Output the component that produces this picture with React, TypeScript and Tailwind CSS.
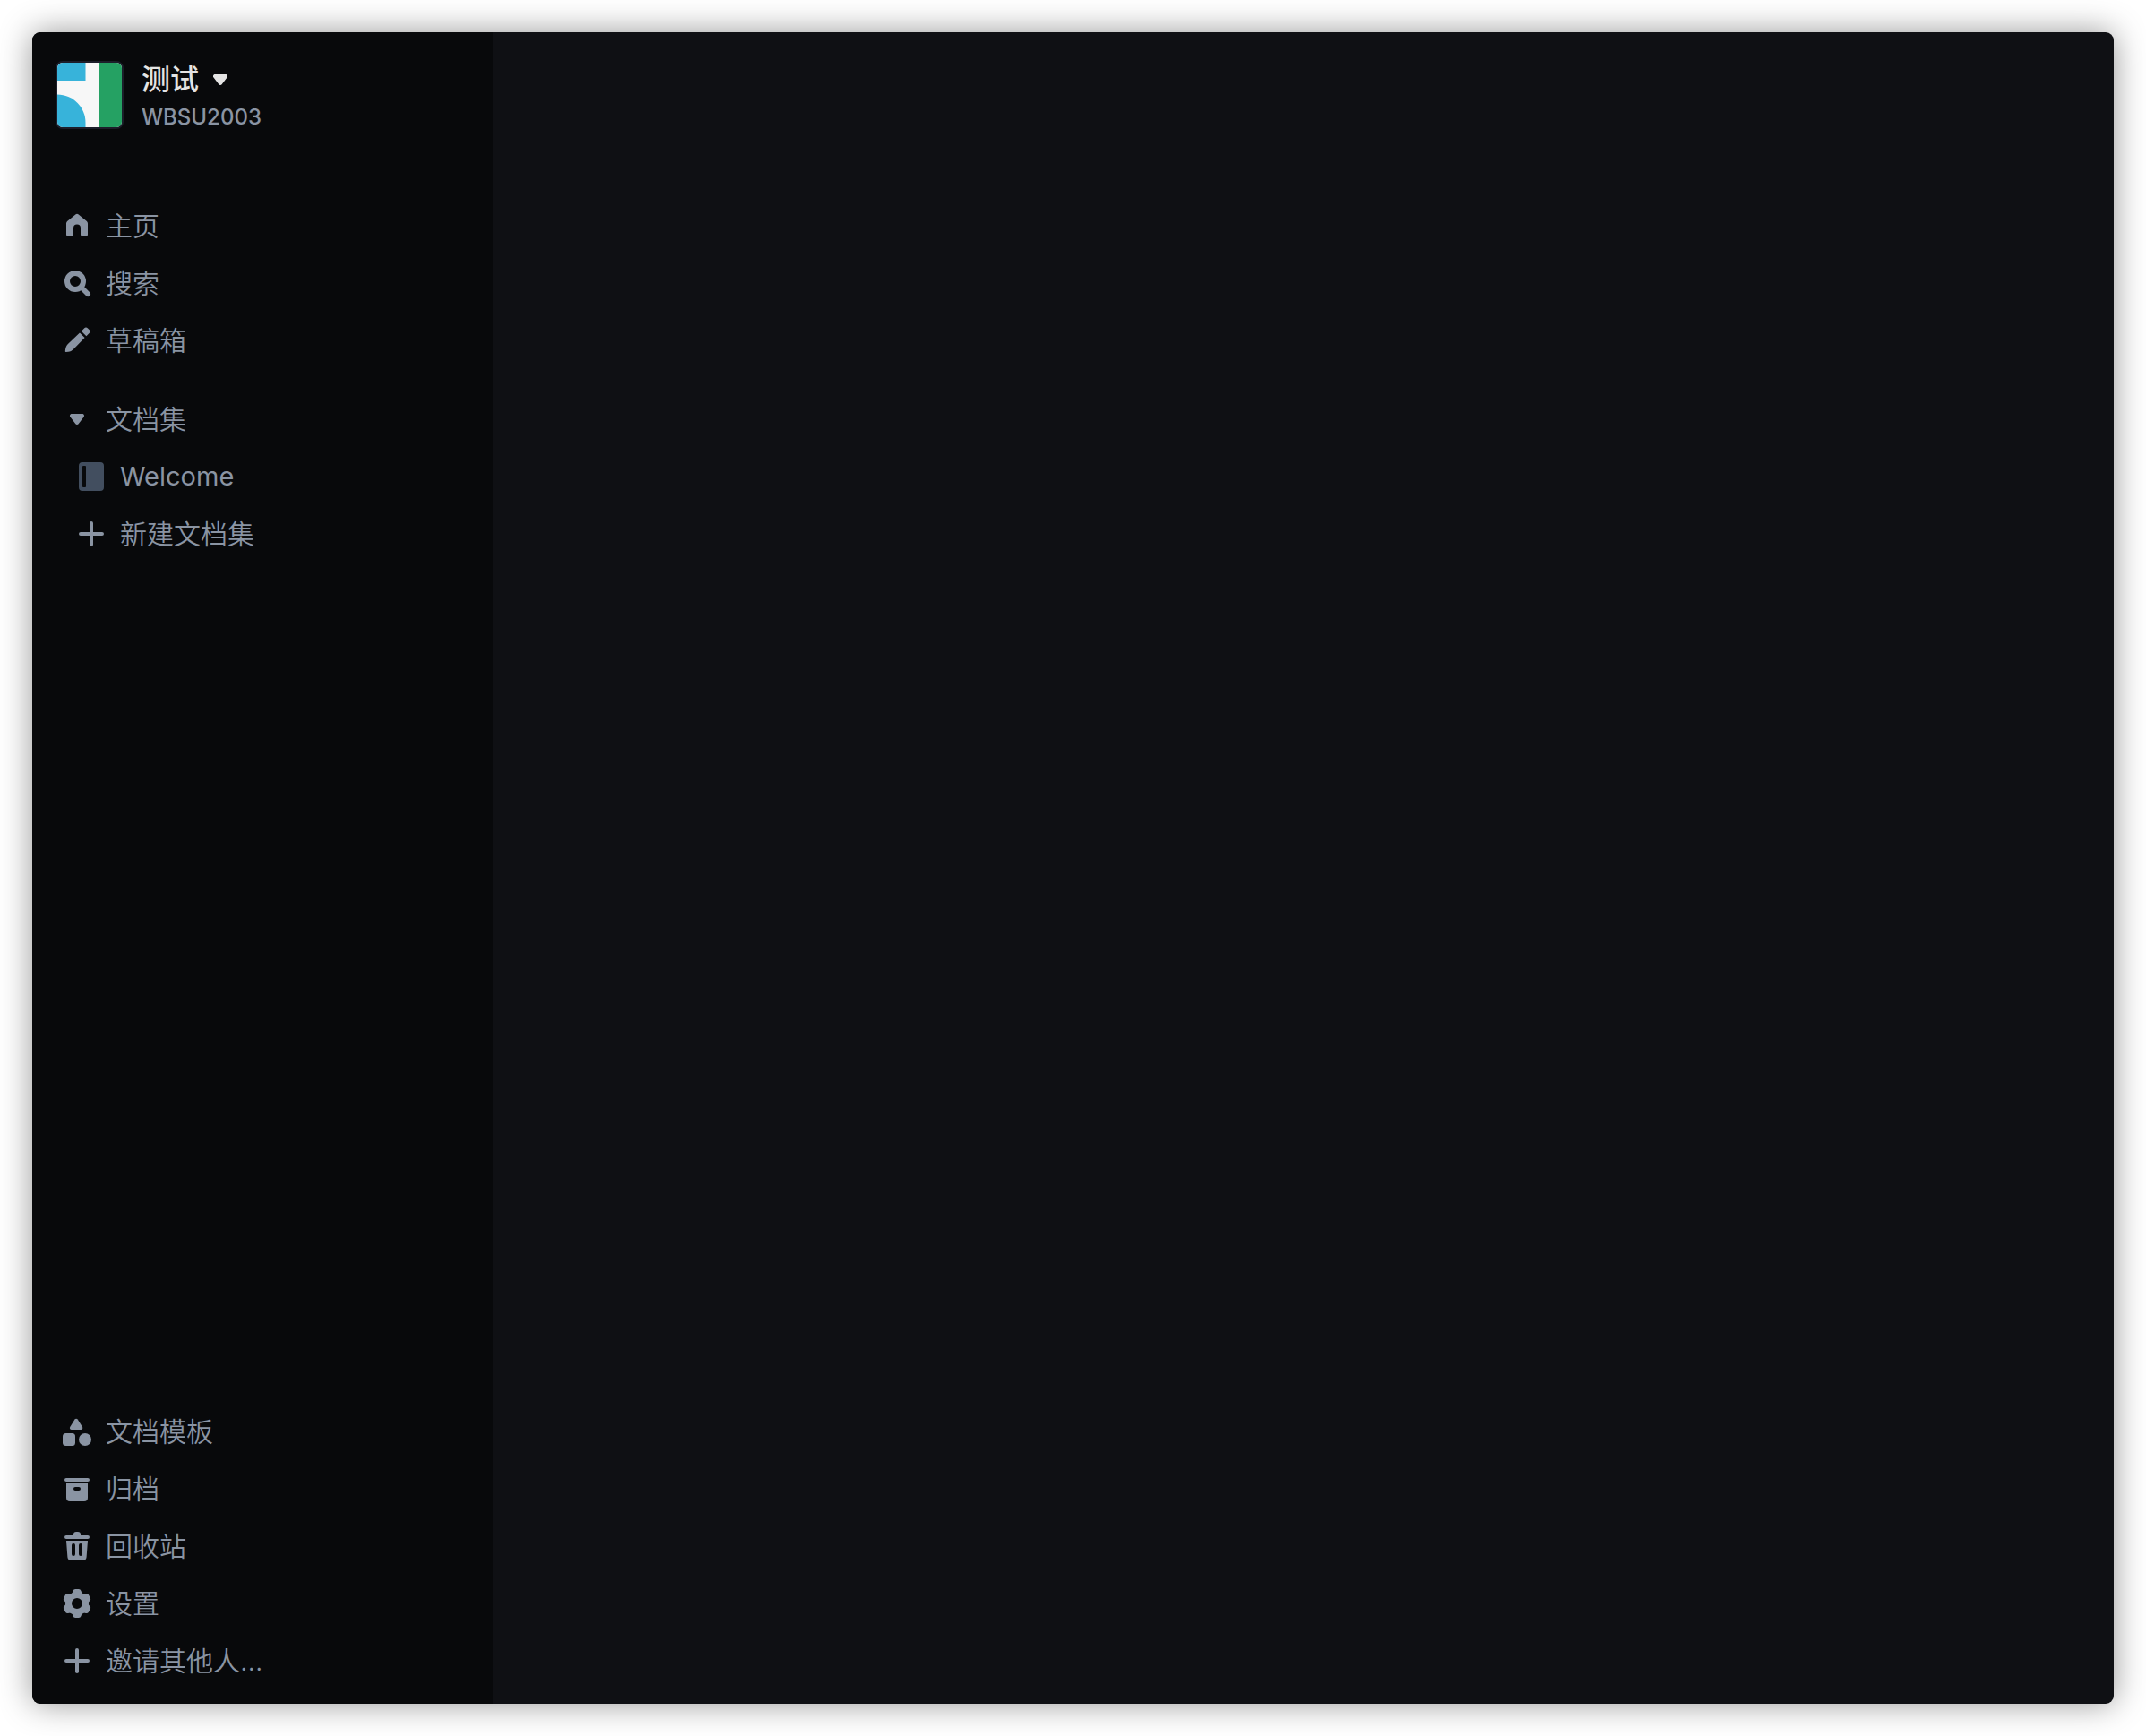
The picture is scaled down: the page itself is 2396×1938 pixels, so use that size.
import type { ReactNode } from "react";

function Icon({ children, className = "" }: { children: ReactNode; className?: string }) {
  return (
    <svg viewBox="0 0 48 48" fill="currentColor" aria-hidden="true" className={`size-12 shrink-0 ${className}`}>
      {children}
    </svg>
  );
}

const HomeIcon = () => (
  <Icon>
    <path d="M22.6 11.3a2.2 2.2 0 0 1 2.8 0l9.2 7.4A3.6 3.6 0 0 1 36 21.6V34a2 2 0 0 1-2 2h-4a2 2 0 0 1-2-2v-7.5a4 4 0 0 0-8 0V34a2 2 0 0 1-2 2h-4a2 2 0 0 1-2-2V21.6a3.6 3.6 0 0 1 1.4-2.9Z" />
  </Icon>
);

const SearchIcon = () => (
  <Icon>
    <circle cx="22" cy="22" r="9" fill="none" stroke="currentColor" strokeWidth="6" />
    <path d="M29 29l7.2 7.2" fill="none" stroke="currentColor" strokeWidth="5.6" strokeLinecap="round" />
  </Icon>
);

const PencilIcon = () => (
  <Icon>
    <path d="M27 15.500l5.600 5.600-12.700 12.800c-1.600 1.600-3.600 2.500-5.800 2.800l-2.200.3a1 1 0 0 1-1.100-1.100l.3-2.200c.3-2.200 1.200-4.200 2.800-5.800Z" />
    <path d="M28.800 13.700l3.200-3.200a2.800 2.800 0 0 1 4 0l1.600 1.600a2.800 2.800 0 0 1 0 4l-3.200 3.200Z" />
  </Icon>
);

const TriangleIcon = () => (
  <path d="M18.200 18h11.600c1.900 0 2.900 2 1.700 3.500l-5.700 7.600a2.200 2.200 0 0 1-3.600 0l-5.700-7.600C15.300 20 16.300 18 18.200 18Z" />
);

const BookIcon = () => (
  <Icon className="text-[#424e5f]">
    <path
      fillRule="evenodd"
      d="M14 8h20a4 4 0 0 1 4 4v24a4 4 0 0 1-4 4H14a4 4 0 0 1-4-4V12a4 4 0 0 1 4-4Zm1 4a1 1 0 0 0-1 1v22a1 1 0 0 0 1 1h2a1 1 0 0 0 1-1V13a1 1 0 0 0-1-1Z"
    />
  </Icon>
);

const PlusIcon = () => (
  <Icon>
    <path d="M12 24h24M24 12v24" fill="none" stroke="currentColor" strokeWidth="4" strokeLinecap="round" />
  </Icon>
);

const ShapesIcon = () => (
  <Icon>
    <path d="M21.500 10.600a1.900 1.900 0 0 1 3.200 0l5.300 8.400c.8 1.300 0 3-1.600 3H17.800c-1.600 0-2.400-1.700-1.600-3Z" />
    <rect x="8" y="26" width="14" height="14" rx="3.500" />
    <circle cx="33" cy="33" r="7" />
  </Icon>
);

const ArchiveIcon = () => (
  <Icon>
    <rect x="10" y="12" width="28" height="4" rx="2" />
    <path
      fillRule="evenodd"
      d="M12 18h24v16a4 4 0 0 1-4 4H16a4 4 0 0 1-4-4Zm10 4a2 2 0 0 0 0 4h4a2 2 0 0 0 0-4Z"
    />
  </Icon>
);

const TrashIcon = () => (
  <Icon>
    <path d="M12 12h8v-1a3 3 0 0 1 3-3h2a3 3 0 0 1 3 3v1h8a2 2 0 0 1 0 4H12a2 2 0 0 1 0-4Z" />
    <path
      fillRule="evenodd"
      d="M12 18h24l-1.400 18.300A4 4 0 0 1 30.600 40H17.400a4 4 0 0 1-4-3.700Zm8 3a2 2 0 0 0-2 2v10a2 2 0 0 0 4 0V23a2 2 0 0 0-2-2Zm8 0a2 2 0 0 0-2 2v10a2 2 0 0 0 4 0V23a2 2 0 0 0-2-2Z"
    />
  </Icon>
);

const GearIcon = () => (
  <Icon>
    <path
      fillRule="evenodd"
      d="M24 11a13 13 0 0 1 0 26a13 13 0 0 1 0-26Zm0 7a6 6 0 0 0 0 12a6 6 0 0 0 0-12Z"
    />
    {[0, 60, 120, 180, 240, 300].map((angle) => (
      <path
        key={angle}
        transform={`rotate(${angle} 24 24)`}
        d="M18.200 13.500l1.300-3.600A2.800 2.800 0 0 1 22.100 8h3.800a2.800 2.800 0 0 1 2.600 1.900l1.300 3.600-3.800 3h-4Z"
      />
    ))}
  </Icon>
);

function NavItem({ icon, label, nested = false, latin = false }: { icon: ReactNode; label: string; nested?: boolean; latin?: boolean }) {
  return (
    <li>
      <a href="#" className={`flex h-16 items-center gap-2 ${nested ? "pl-4" : ""}`}>
        {icon}
        <span className={latin ? "truncate text-[29px] font-normal" : "truncate"}>{label}</span>
      </a>
    </li>
  );
}

function Logo() {
  return (
    <svg viewBox="0 0 72 72" aria-hidden="true" className="size-19 shrink-0 rounded-lg border-2 border-[#1c1e2a] bg-[#f7f7f7]">
      <path d="M0 0h31.500v20H0Z" fill="#37b3da" />
      <path d="M0 35.500c17.500 0 31.500 14 31.500 31.500v5H0Z" fill="#37b3da" />
      <path d="M47 0h25v72H47Z" fill="#25a163" />
    </svg>
  );
}

export default function App() {
  return (
    <div className="flex min-h-screen bg-white p-9 font-['Inter','Noto_Sans_CJK_SC',sans-serif]">
      <div className="flex flex-1 overflow-hidden rounded-[9px] bg-[#0f1014] shadow-[0_0_36px_rgba(0,0,0,0.42)]">
        <aside className="flex w-[514px] shrink-0 flex-col bg-[#08090b] px-6.5 pt-8 pb-4 text-[30px] font-[350] text-[#8a94a3]">
          <button type="button" className="flex items-start gap-5 text-left">
            <Logo />
            <span className="flex flex-col">
              <span className="flex items-center text-[32px] leading-[42px] font-medium text-[#e4e4e4]">
                测试
                <svg viewBox="0 0 48 48" fill="currentColor" aria-hidden="true" className="size-12 -my-1">
                  <TriangleIcon />
                </svg>
              </span>
              <span className="text-2xl leading-[42px] font-[450]">WBSU2003</span>
            </span>
          </button>

          <nav aria-label="主导航" className="mt-17 flex flex-1 flex-col">
            <ul>
              <NavItem icon={<HomeIcon />} label="主页" />
              <NavItem icon={<SearchIcon />} label="搜索" />
              <NavItem icon={<PencilIcon />} label="草稿箱" />
            </ul>
            <button type="button" aria-expanded="true" className="mt-6 flex h-16 items-center gap-2 text-left">
              <Icon>
                <TriangleIcon />
              </Icon>
              <span>文档集</span>
            </button>
            <ul>
              <NavItem nested latin icon={<BookIcon />} label="Welcome" />
              <NavItem nested icon={<PlusIcon />} label="新建文档集" />
            </ul>
            <ul className="mt-auto">
              <NavItem icon={<ShapesIcon />} label="文档模板" />
              <NavItem icon={<ArchiveIcon />} label="归档" />
              <NavItem icon={<TrashIcon />} label="回收站" />
              <NavItem icon={<GearIcon />} label="设置" />
              <NavItem icon={<PlusIcon />} label="邀请其他人..." />
            </ul>
          </nav>
        </aside>
        <main className="min-w-0 flex-1" />
      </div>
    </div>
  );
}
